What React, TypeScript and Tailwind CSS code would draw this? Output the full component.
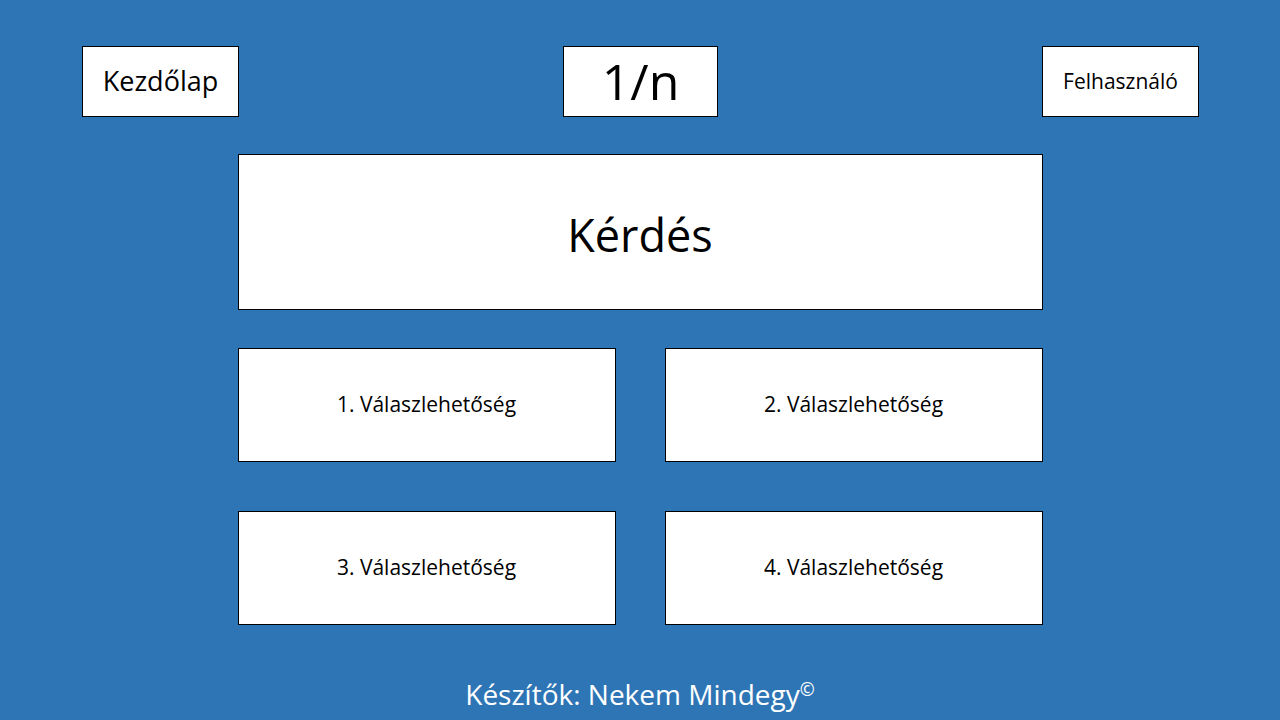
const font = { fontFamily: '"Open Sans", "Noto Sans", sans-serif' };

function Box({ className, children }: { className: string; children: React.ReactNode }) {
  return (
    <div className={`flex items-center justify-center border border-black bg-white text-black ${className}`}>
      {children}
    </div>
  );
}

export default function App() {
  const answers = ["1. Válaszlehetőség", "2. Válaszlehetőség", "3. Válaszlehetőség", "4. Válaszlehetőség"];

  return (
    <div className="flex h-[720px] w-full flex-col items-center bg-[#2e75b6]" style={font}>
      <div className="flex w-full justify-between pl-[82px] pr-[81px] pt-[46px]">
        <Box className="h-[71px] w-[157px] text-[27px]">Kezdőlap</Box>
        <Box className="h-[71px] w-[155px] text-[50px]">1/n</Box>
        <Box className="h-[71px] w-[157px] text-[21px]">Felhasználó</Box>
      </div>

      <Box className="mt-[37px] h-[156px] w-[805px] pt-[6px] text-[45px]">Kérdés</Box>

      <div className="mt-[38px] grid w-[805px] grid-cols-[378px_378px] justify-between gap-y-[49px]">
        {answers.map((a) => (
          <Box key={a} className="h-[114px] w-[378px] text-[21px]">
            {a}
          </Box>
        ))}
      </div>

      <div className="mt-[55px] text-[28px] leading-none text-white">
        Készítők: Nekem Mindegy<sup className="text-[18px]">©</sup>
      </div>
    </div>
  );
}
